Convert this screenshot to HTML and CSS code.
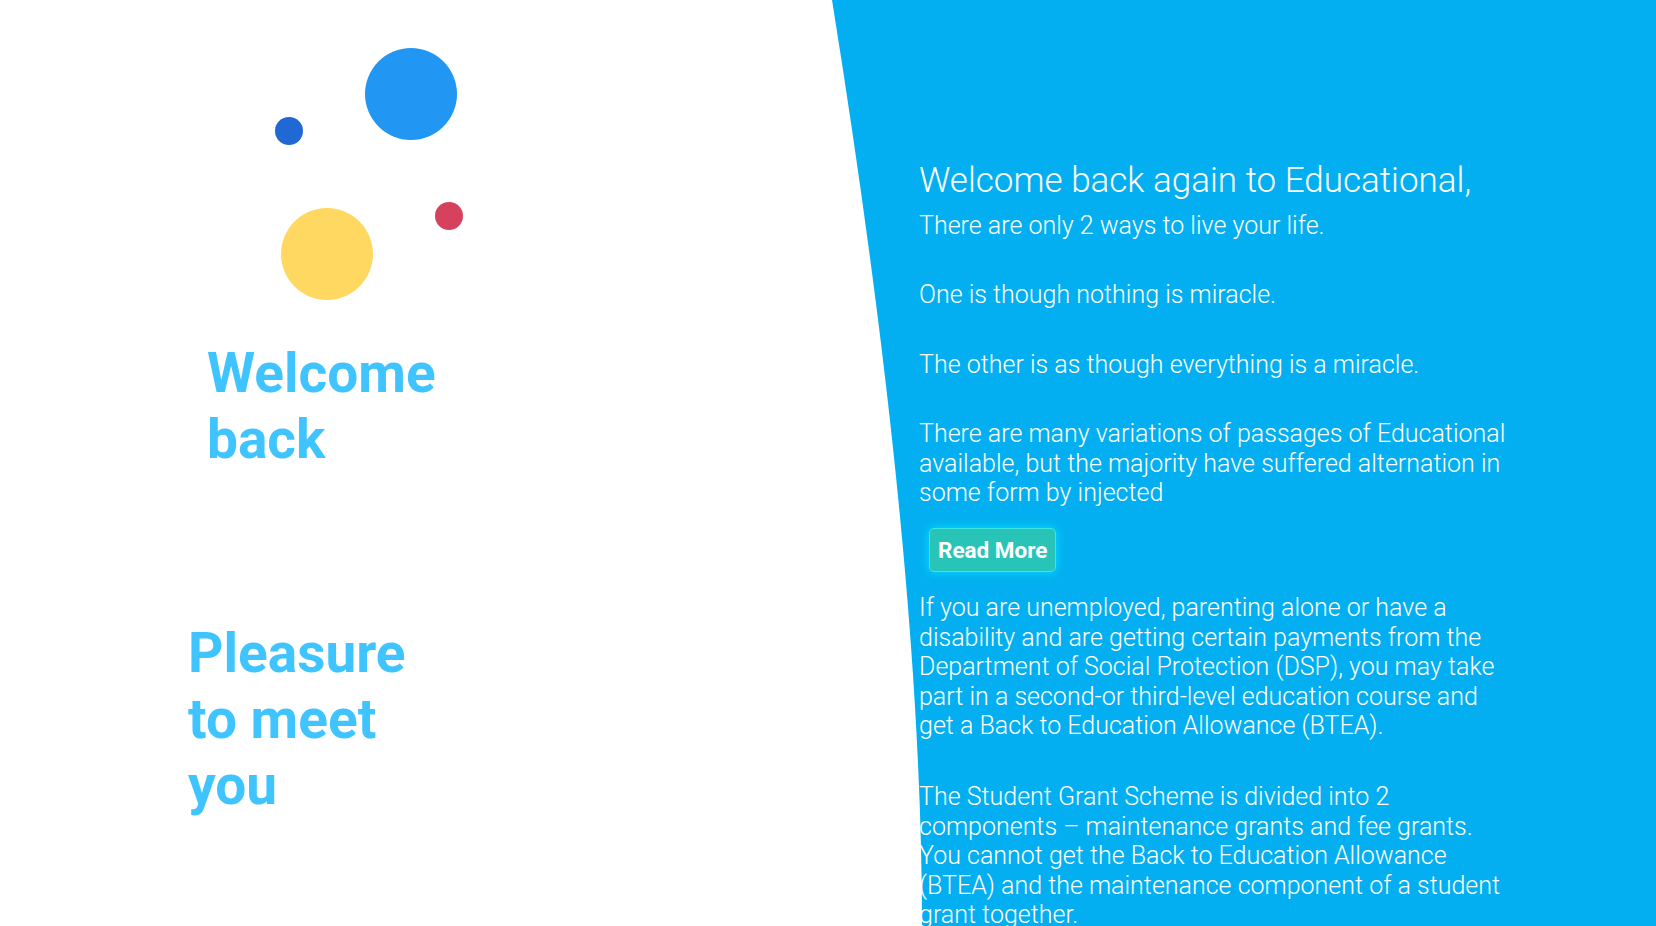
FILE: index.html
```html
<!DOCTYPE html>
<html lang="en">
<head>
<meta charset="utf-8">
<title>Welcome back</title>
<link rel="stylesheet" href="styles.css">
</head>
<body>
<div class="page">
  <section class="left">
    <div class="bubbles">
      <span class="dot dot-big-blue"></span>
      <span class="dot dot-small-blue"></span>
      <span class="dot dot-red"></span>
      <span class="dot dot-yellow"></span>
    </div>
    <h1 class="big-title welcome">Welcome<br>back</h1>
    <h2 class="big-title pleasure">Pleasure<br>to meet<br>you</h2>
  </section>
  <section class="right">
    <svg class="curve" width="92" height="926" viewBox="0 0 92 926" preserveAspectRatio="none" aria-hidden="true">
      <path d="M0 0 Q90 560 90 926 L0 926 Z" fill="#ffffff"/>
    </svg>
    <div class="content">
      <h2 class="intro-title">Welcome back again to Educational,</h2>
      <p class="para">There are only 2 ways to live your life.</p>
      <p class="para">One is though nothing is miracle.</p>
      <p class="para">The other is as though everything is a miracle.</p>
      <p class="para para-tight">There are many variations of passages of Educational available, but the majority have suffered alternation in some form by injected</p>
      <button class="read-more" type="button">Read More</button>
      <p class="para para-loose">If you are unemployed, parenting alone or have a disability and are getting certain payments from the Department of Social Protection (DSP), you may take part in a second-or third-level education course and get a Back to Education Allowance (BTEA).</p>
      <p class="para">The Student Grant Scheme is divided into 2 components – maintenance grants and fee grants. You cannot get the Back to Education Allowance (BTEA) and the maintenance component of a student grant together.</p>
    </div>
  </section>
</div>
</body>
</html>
```

FILE: styles.css
```css
html, body {
  margin: 0;
  padding: 0;
  width: 1656px;
  height: 926px;
  overflow: hidden;
  background: #ffffff;
}

.page {
  display: flex;
  width: 1656px;
  height: 926px;
  font-family: Roboto, "Liberation Sans", sans-serif;
}

.left {
  flex: none;
  width: 832px;
  background: #ffffff;
}

.bubbles {
  position: relative;
  height: 340px;
}

.dot {
  position: absolute;
  border-radius: 50%;
}

.dot-big-blue {
  left: 365px;
  top: 48px;
  width: 92px;
  height: 92px;
  background: #2196f3;
}

.dot-small-blue {
  left: 275px;
  top: 117px;
  width: 28px;
  height: 28px;
  background: #2068d4;
}

.dot-red {
  left: 435px;
  top: 202px;
  width: 28px;
  height: 28px;
  background: #d6425e;
}

.dot-yellow {
  left: 281px;
  top: 208px;
  width: 92px;
  height: 92px;
  background: #ffd862;
}

.big-title {
  margin: 0;
  font-size: 55px;
  line-height: 66px;
  font-weight: 700;
  color: #40c4ff;
}

.welcome {
  margin-left: 207px;
}

.pleasure {
  margin-top: 148px;
  margin-left: 188px;
}

.right {
  flex: 1;
  position: relative;
  overflow: hidden;
  background: #03aff0;
  color: #ffffff;
}

.curve {
  position: absolute;
  left: 0;
  top: 0;
  display: block;
  z-index: 2;
}

.content {
  display: flex;
  flex-direction: column;
  align-items: flex-start;
  width: 594px;
  padding: 160px 0 0 87px;
}

.intro-title {
  margin: 0 0 9px;
  font-size: 35px;
  line-height: 42px;
  font-weight: 300;
}

.para {
  margin: 0 0 40px;
  font-size: 25px;
  line-height: 29.4px;
  font-weight: 300;
}

.para-tight {
  margin-bottom: 21px;
}

.para-loose {
  margin-bottom: 42px;
}

.read-more {
  margin: 0 0 21px 10px;
  height: 44px;
  padding: 0 8px;
  border: 1px solid #3ee6e0;
  border-radius: 5px;
  background: #29c4b8;
  color: #ffffff;
  font-family: Roboto, "Liberation Sans", sans-serif;
  font-size: 22.5px;
  font-weight: 700;
  box-shadow: 0 0 10px 1px rgba(0, 229, 255, 0.75);
  cursor: pointer;
}
```
